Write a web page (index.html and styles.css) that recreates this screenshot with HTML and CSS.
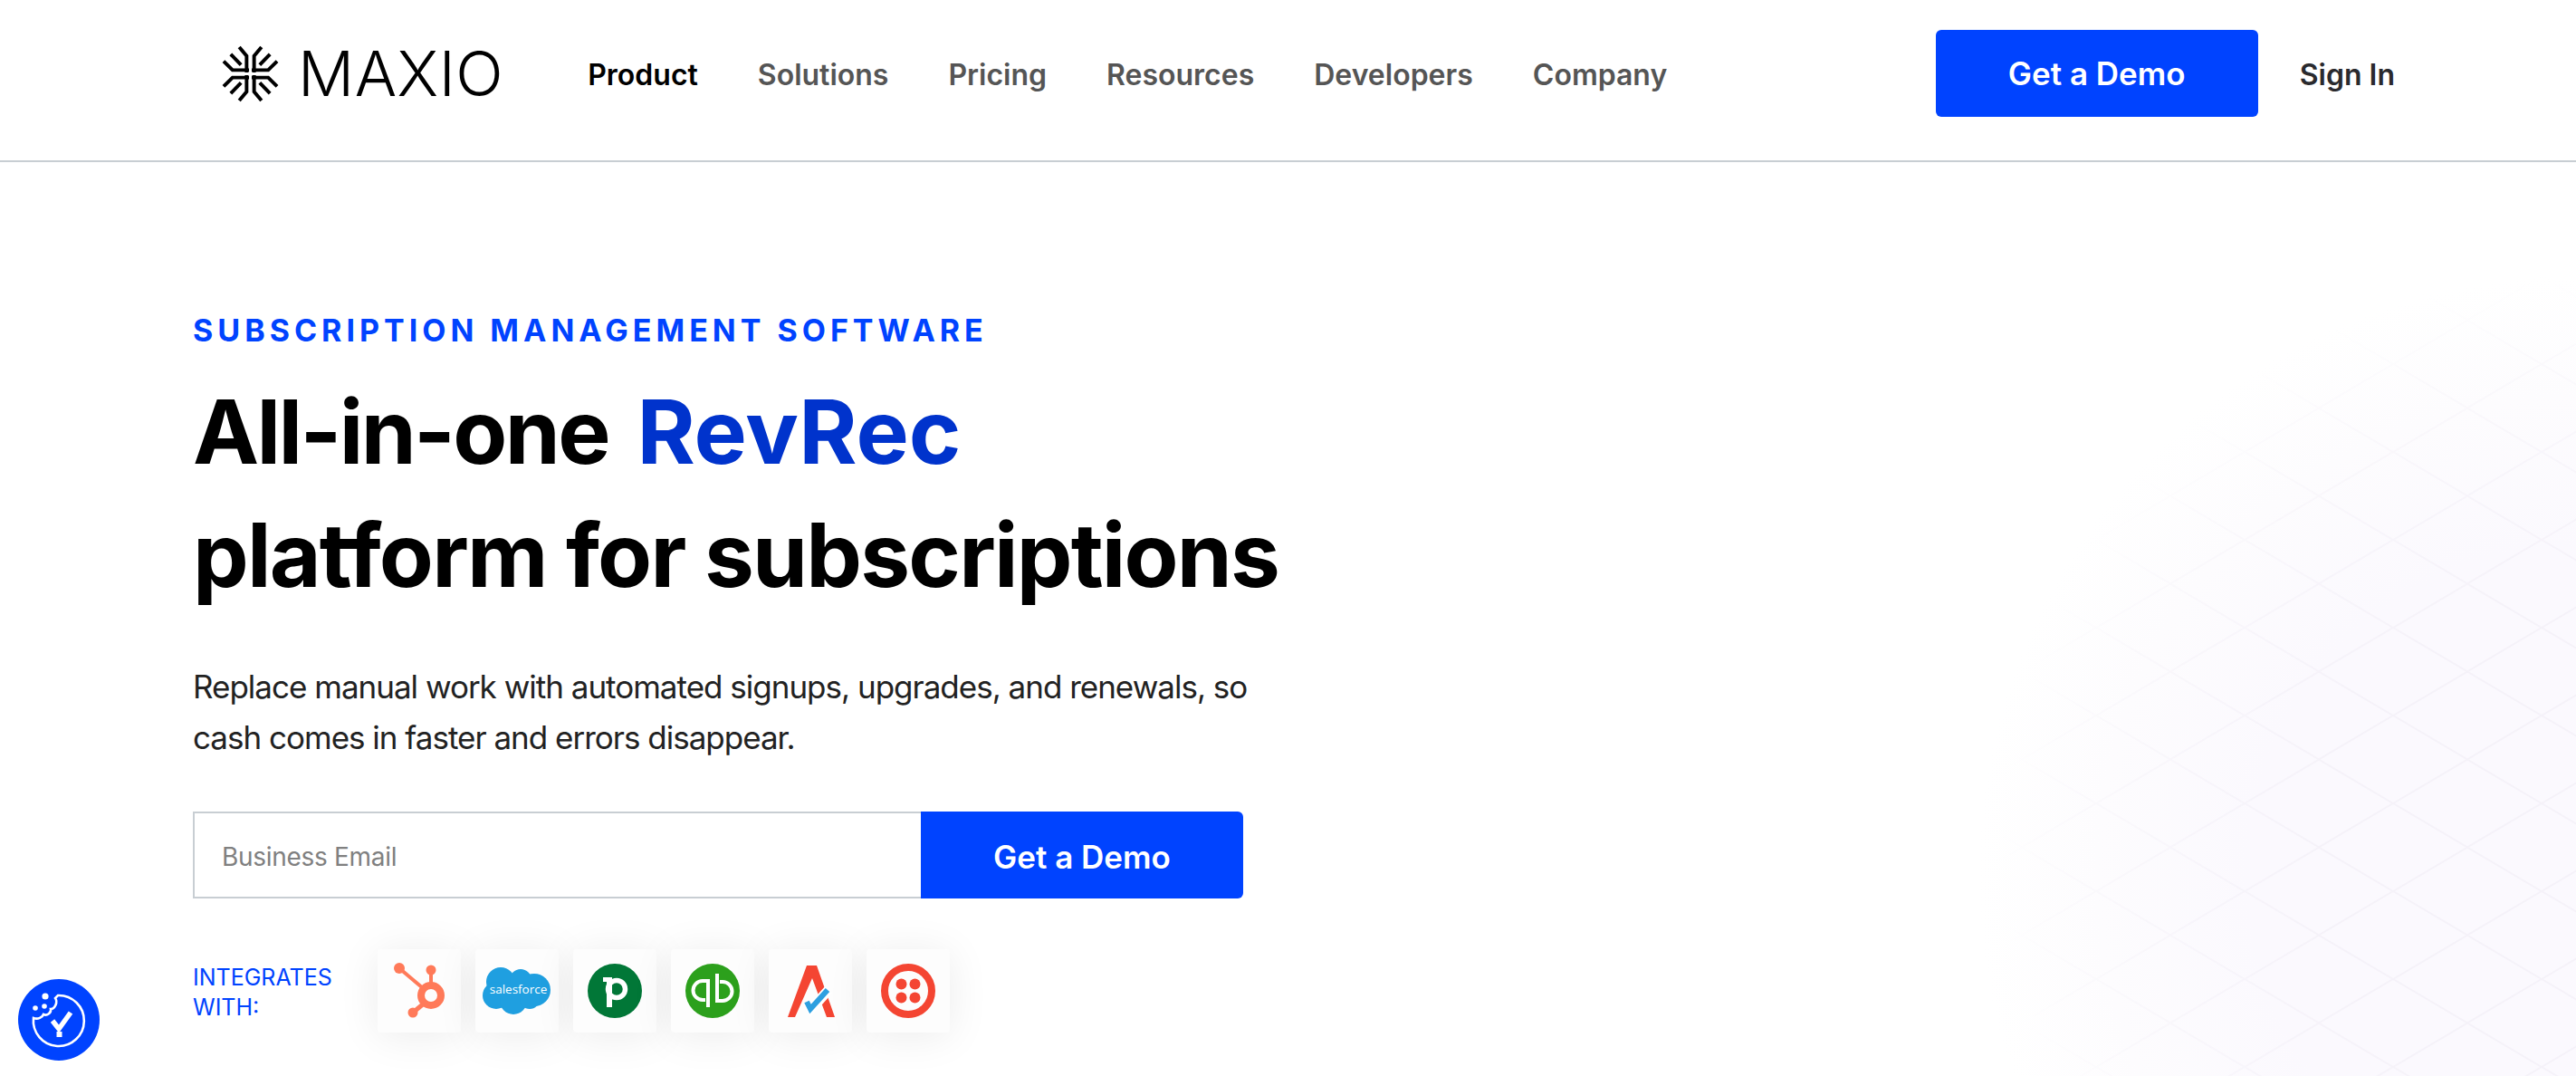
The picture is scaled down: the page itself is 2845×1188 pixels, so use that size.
FILE: index.html
```html
<!DOCTYPE html>
<html lang="en">
<head>
<meta charset="UTF-8">
<title>Maxio - Subscription Management Software</title>
<meta name="viewport" content="width=device-width, initial-scale=1.0">
<link rel="stylesheet" href="styles.css">
</head>
<body>

<header class="topbar">
    <a class="logo" href="#">
        <svg class="logo-mark" viewBox="-32 -32 64 64" width="63" height="63">
            <defs>
                <g id="prong" fill="none" stroke="#000" stroke-width="4">
                    <path d="M-12.5 -30 L-4.2 -20 V-1.5"/>
                    <path d="M-30 -14 L-20 -4.2 H-1.5"/>
                    <path d="M-22 -22 L-10.5 -10"/>
                </g>
            </defs>
            <use href="#prong"/>
            <use href="#prong" transform="scale(-1 1)"/>
            <use href="#prong" transform="scale(1 -1)"/>
            <use href="#prong" transform="scale(-1 -1)"/>
        </svg>
        <span class="logo-text">MAXIO</span>
    </a>
    <nav class="mainnav">
        <a class="active" href="#">Product</a>
        <a href="#">Solutions</a>
        <a href="#">Pricing</a>
        <a href="#">Resources</a>
        <a href="#">Developers</a>
        <a href="#">Company</a>
    </nav>
    <a class="btn-demo" href="#">Get a Demo</a>
    <a class="signin" href="#">Sign In</a>
</header>

<main class="hero">
    <div class="hero-bg">
        <svg width="800" height="1010" viewBox="0 0 800 1010">
            <defs>
                <pattern id="lattice" x="24" y="29" width="164" height="97" patternUnits="userSpaceOnUse">
                    <path d="M0 48.5 L82 0 L164 48.5 L82 97 Z" fill="none" stroke="#f5f2f9" stroke-width="2"/>
                </pattern>
                <radialGradient id="fade" gradientUnits="userSpaceOnUse" cx="800" cy="760" r="640">
                    <stop offset="0.45" stop-color="#fff"/>
                    <stop offset="1" stop-color="#000"/>
                </radialGradient>
                <mask id="lattice-mask">
                    <rect width="800" height="1010" fill="url(#fade)"/>
                </mask>
            </defs>
            <rect width="800" height="1010" fill="url(#lattice)" mask="url(#lattice-mask)"/>
        </svg>
    </div>

    <p class="eyebrow">SUBSCRIPTION MANAGEMENT SOFTWARE</p>
    <h1><span class="tight">All-in-one</span> <span class="rotating">RevRec</span><br>platform for subscriptions</h1>
    <p class="lead">Replace manual work with automated signups, upgrades, and renewals, so<br>cash comes in faster and errors disappear.</p>

    <form class="demo-form">
        <input type="text" placeholder="Business Email">
        <button type="button">Get a Demo</button>
    </form>

    <div class="integrations">
        <span class="int-label">INTEGRATES<br>WITH:</span>
        <div class="int-tiles">
            <div class="tile">
                <svg viewBox="0 0 92 92" width="92" height="92">
                    <g fill="none" stroke="#ff7a59">
                        <circle cx="59" cy="51" r="11" stroke-width="8"/>
                        <path d="M24 21 L50 43" stroke-width="4"/>
                        <path d="M59 23 V38" stroke-width="4"/>
                        <path d="M39 70 L51 60" stroke-width="5"/>
                    </g>
                    <g fill="#ff7a59">
                        <circle cx="24" cy="21" r="6"/>
                        <circle cx="59" cy="23" r="5.5"/>
                        <circle cx="39" cy="70" r="5.5"/>
                    </g>
                </svg>
            </div>
            <div class="tile">
                <svg viewBox="0 0 92 92" width="92" height="92">
                    <g fill="#1f9fe0">
                        <circle cx="28" cy="36" r="16"/>
                        <circle cx="50" cy="34" r="12"/>
                        <circle cx="65" cy="45" r="18"/>
                        <circle cx="23" cy="51" r="15"/>
                        <circle cx="42" cy="57" r="15"/>
                        <circle cx="60" cy="55" r="11"/>
                    </g>
                    <text class="sf-text" x="47.5" y="49" text-anchor="middle">salesforce</text>
                </svg>
            </div>
            <div class="tile">
                <svg viewBox="0 0 92 92" width="92" height="92">
                    <circle cx="46" cy="46" r="30" fill="#017737"/>
                    <rect x="37" y="31" width="6" height="33" fill="#fff"/>
                    <rect x="33" y="31" width="5" height="5" fill="#fff"/>
                    <circle cx="48" cy="44" r="9.5" fill="none" stroke="#fff" stroke-width="5.5"/>
                </svg>
            </div>
            <div class="tile">
                <svg viewBox="0 0 92 92" width="92" height="92">
                    <circle cx="46" cy="46" r="30" fill="#2ca01c"/>
                    <g fill="none" stroke="#fff" stroke-width="4">
                        <path d="M41 35 H35 a10.5 10.5 0 0 0 0 21 H38"/>
                        <path d="M41 33 V64"/>
                        <path d="M51 57 H57 a10.5 10.5 0 0 0 0 -21 H54"/>
                        <path d="M51 59 V27"/>
                    </g>
                </svg>
            </div>
            <div class="tile">
                <svg viewBox="0 0 92 92" width="92" height="92">
                    <polygon points="42,18 53,18 73,75 64,75 48,32 29,75 21,75" fill="#f44532"/>
                    <polyline points="43,58 47,66 66,45" fill="none" stroke="#fff" stroke-width="11"/>
                    <polyline points="42,58 46,66 65,45" fill="none" stroke="#2d9fe0" stroke-width="6"/>
                </svg>
            </div>
            <div class="tile">
                <svg viewBox="0 0 92 92" width="92" height="92">
                    <circle cx="46" cy="46" r="26" fill="none" stroke="#f44532" stroke-width="8"/>
                    <g fill="#f44532">
                        <circle cx="38.5" cy="38.5" r="6"/>
                        <circle cx="53.5" cy="38.5" r="6"/>
                        <circle cx="38.5" cy="53.5" r="6"/>
                        <circle cx="53.5" cy="53.5" r="6"/>
                    </g>
                </svg>
            </div>
        </div>
    </div>
</main>

<div class="cookie-badge">
    <svg viewBox="0 0 90 90" width="90" height="90">
        <path d="M44 18 A28 28 0 1 1 17 43 C22 45 27 42 28 39 C32 41 37 37 36 33 C41 33 44 25 41 21 Z" fill="none" stroke="#fff" stroke-width="2.6"/>
        <g fill="#fff">
            <circle cx="30" cy="19" r="3.6"/>
            <circle cx="29" cy="30" r="2.8"/>
            <circle cx="19" cy="32" r="2.8"/>
            <rect x="42.5" y="58" width="6" height="6"/>
        </g>
        <path d="M38 46 L45 55 L58 37" fill="none" stroke="#fff" stroke-width="5.5"/>
    </svg>
</div>

</body>
</html>
```

FILE: styles.css
```css
* {
    box-sizing: border-box;
}
html, body {
    height: 1188px;
    overflow: hidden;
}
body {
    margin: 0;
    padding: 0;
    font-family: Inter, "Liberation Sans", sans-serif;
    background: #fff;
    color: #000;
}
a {
    text-decoration: none;
    color: inherit;
}

.topbar {
    display: flex;
    align-items: center;
    height: 179px;
    padding: 0 200px 15px 245px;
    border-bottom: 2px solid #c8ced3;
    background: #fff;
}
.logo {
    display: flex;
    align-items: center;
    gap: 21px;
}
.logo-text {
    font-size: 69px;
    font-weight: 300;
    line-height: 1;
    color: #000;
    letter-spacing: 0.5px;
}
.mainnav {
    display: flex;
    gap: 66px;
    margin-left: 93px;
    margin-right: auto;
    padding-top: 2px;
    font-size: 32px;
    font-weight: 600;
    color: #555;
}
.mainnav .active {
    color: #000;
}
.btn-demo {
    display: flex;
    align-items: center;
    justify-content: center;
    width: 356px;
    height: 96px;
    background: #0043ff;
    color: #fff;
    border-radius: 6px;
    font-size: 35px;
    font-weight: 600;
}
.signin {
    margin-left: 46px;
    padding-top: 2px;
    font-size: 32px;
    font-weight: 600;
    color: #2a2a2e;
}

.hero {
    position: relative;
    height: 1009px;
    padding: 166px 0 0 213px;
    background: radial-gradient(circle 660px at 100% 78%, #fbf9fe 0, #fbf9fe 55%, #fdfcfe 80%, #fff 100%);
}
.hero-bg {
    position: absolute;
    right: 0;
    top: 0;
}
.hero > p, .hero > h1, .hero > form, .hero > div.integrations {
    position: relative;
}
.eyebrow {
    margin: 0;
    font-size: 34px;
    line-height: 40px;
    font-weight: 700;
    letter-spacing: 5px;
    color: #0043ff;
}
h1 {
    margin: 24px 0 0;
    font-size: 98px;
    line-height: 136px;
    font-weight: 700;
    letter-spacing: -1.8px;
    color: #000;
}
.tight {
    letter-spacing: -2.6px;
}
.rotating {
    margin-left: 10px;
    letter-spacing: 0;
    color: #0033cc;
}
.lead {
    margin: 49px 0 0;
    font-size: 35px;
    line-height: 56px;
    letter-spacing: -1px;
    color: #222;
}
.demo-form {
    display: flex;
    margin-top: 54px;
    width: 1160px;
    height: 96px;
}
.demo-form input {
    width: 804px;
    height: 96px;
    padding: 4px 30px 0;
    border: 2px solid #c8ced3;
    border-right: none;
    border-radius: 0;
    background: #fff;
    font-family: inherit;
    font-size: 28px;
    letter-spacing: -0.3px;
    outline: none;
}
.demo-form input::placeholder {
    color: #808080;
    opacity: 1;
}
.demo-form button {
    width: 356px;
    height: 96px;
    padding: 4px 0 0;
    border: none;
    border-radius: 0 6px 6px 0;
    background: #0043ff;
    color: #fff;
    font-family: inherit;
    font-size: 35px;
    font-weight: 600;
}

.integrations {
    display: flex;
    align-items: center;
    margin-top: 56px;
}
.int-label {
    width: 204px;
    padding-top: 4px;
    font-size: 25px;
    line-height: 33px;
    color: #0043ff;
}
.int-tiles {
    display: flex;
    gap: 16px;
}
.tile {
    width: 92px;
    height: 92px;
    background: #fdfdfd;
    border-radius: 4px;
    box-shadow: 0 4px 46px rgba(0, 0, 0, 0.08);
}
.tile svg {
    display: block;
}
.sf-text {
    font-family: "Open Sans", sans-serif;
    font-size: 13.5px;
    fill: #fff;
}

.cookie-badge {
    position: fixed;
    left: 20px;
    bottom: 17px;
    width: 90px;
    height: 90px;
    border-radius: 50%;
    background: #0043ff;
}
```
